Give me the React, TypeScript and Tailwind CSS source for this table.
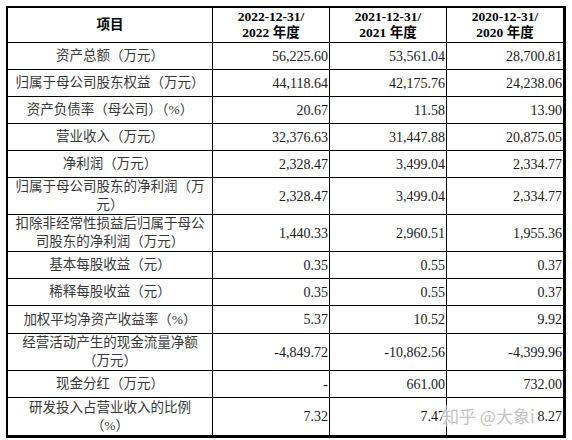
import React from "react";

interface Row {
  label: React.ReactNode;
  values: string[];
  h: string;
}

const rows: Row[] = [
  { label: "资产总额（万元）", values: ["56,225.60", "53,561.04", "28,700.81"], h: "h-[27px]" },
  { label: "归属于母公司股东权益（万元）", values: ["44,118.64", "42,175.76", "24,238.06"], h: "h-[27px]" },
  { label: "资产负债率（母公司）（%）", values: ["20.67", "11.58", "13.90"], h: "h-[27px]" },
  { label: "营业收入（万元）", values: ["32,376.63", "31,447.88", "20,875.05"], h: "h-[27px]" },
  { label: "净利润（万元）", values: ["2,328.47", "3,499.04", "2,334.77"], h: "h-[27px]" },
  {
    label: (
      <>
        归属于母公司股东的净利润（万
        <br />
        元）
      </>
    ),
    values: ["2,328.47", "3,499.04", "2,334.77"],
    h: "h-[37px]",
  },
  {
    label: (
      <>
        扣除非经常性损益后归属于母公
        <br />
        司股东的净利润（万元）
      </>
    ),
    values: ["1,440.33", "2,960.51", "1,955.36"],
    h: "h-[37px]",
  },
  { label: "基本每股收益（元）", values: ["0.35", "0.55", "0.37"], h: "h-[27px]" },
  { label: "稀释每股收益（元）", values: ["0.35", "0.55", "0.37"], h: "h-[27px]" },
  { label: "加权平均净资产收益率（%）", values: ["5.37", "10.52", "9.92"], h: "h-[28px]" },
  {
    label: (
      <>
        经营活动产生的现金流量净额
        <br />
        （万元）
      </>
    ),
    values: ["-4,849.72", "-10,862.56", "-4,399.96"],
    h: "h-[37px]",
  },
  { label: "现金分红（万元）", values: ["-", "661.00", "732.00"], h: "h-[27px]" },
  {
    label: (
      <>
        研发投入占营业收入的比例
        <br />
        （%）
      </>
    ),
    values: ["7.32", "7.47", "8.27"],
    h: "h-[37px]",
  },
];

const years = ["2022", "2021", "2020"];

const App: React.FC = () => {
  return (
    <div className="relative w-[572px] h-[440px] bg-white overflow-hidden">
      <div className="ml-[6px] mt-[6px] w-[560px] border-l-2 border-t-2 border-r-[3px] border-b-[3px] border-black font-['Liberation_Serif','Noto_Sans_CJK_SC',serif] text-[14px] text-[#1a1a1a]">
        {/* header */}
        <div className="grid grid-cols-[205px_117px_117px_1fr] h-[35px] border-b border-black font-bold leading-[16px] text-black text-[13.5px]">
          <div className="flex items-center justify-center border-r border-black">项目</div>
          {years.map((y, i) => (
            <div
              key={y}
              className={`flex flex-col items-center justify-center ${i < 2 ? "border-r border-black" : ""}`}
            >
              <span>{y}-12-31/</span>
              <span>{y} 年度</span>
            </div>
          ))}
        </div>
        {rows.map((row, ri) => (
          <div
            key={ri}
            className={`grid grid-cols-[205px_117px_117px_1fr] ${row.h} ${ri < rows.length - 1 ? "border-b border-black" : ""}`}
          >
            <div className="flex items-center justify-center border-r border-black text-center text-[13.5px] leading-[18px] whitespace-nowrap text-[#383838]">
              <span>{row.label}</span>
            </div>
            {row.values.map((v, vi) => (
              <div
                key={vi}
                className={`flex items-center justify-end pr-[1px] ${vi < 2 ? "border-r border-black" : ""}`}
              >
                {v}
              </div>
            ))}
          </div>
        ))}
      </div>
      {/* watermark */}
      <div className="absolute left-[442px] top-[405px] text-[17px] leading-[22px] text-[#c4c4c4] font-['Noto_Sans_CJK_SC',sans-serif] bg-white/50 [text-shadow:0_0_2px_#fff]">
        知乎 @大象i
      </div>
    </div>
  );
};

export default App;
